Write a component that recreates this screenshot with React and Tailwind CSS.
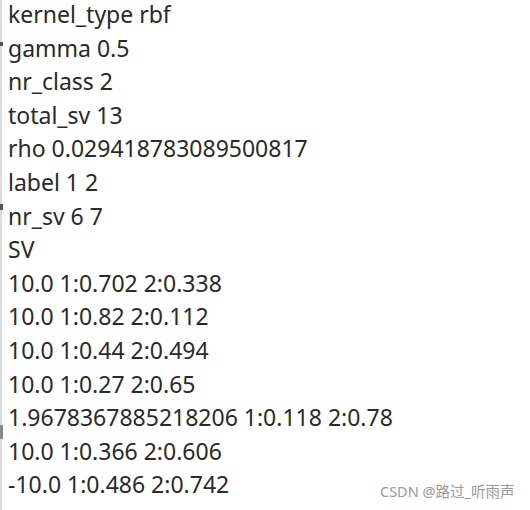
export default function App() {
  const lines = [
    "kernel_type rbf",
    "gamma 0.5",
    "nr_class 2",
    "total_sv 13",
    "rho 0.029418783089500817",
    "label 1 2",
    "nr_sv 6 7",
    "SV",
    "10.0 1:0.702 2:0.338",
    "10.0 1:0.82 2:0.112",
    "10.0 1:0.44 2:0.494",
    "10.0 1:0.27 2:0.65",
    "1.9678367885218206 1:0.118 2:0.78",
    "10.0 1:0.366 2:0.606",
    "-10.0 1:0.486 2:0.742",
    "-10.0 1:0.91 2:0.538",
  ];
  return (
    <div className="relative w-[530px] h-[510px] overflow-hidden bg-white">
      <div className="flex h-full">
        <div className="w-[2px] h-full bg-[#dcdcdc] shrink-0" />
        <div
          className="flex flex-col pl-[6px] -mt-[2px] text-[23px] leading-[33.6px] text-[#2a2a2a]"
          style={{ fontFamily: '"Noto Sans", sans-serif' }}
        >
          {lines.map((l, i) => (
            <div key={i} className="whitespace-pre">{l}</div>
          ))}
        </div>
      </div>
      <div className="absolute left-0 top-[42px] w-[3px] h-[4px] bg-[#555]" />
      <div className="absolute left-0 top-[204px] w-[3px] h-[6px] bg-[#555]" />
      <div className="absolute left-0 top-[425px] w-[3px] h-[14px] bg-[#888]" />
      <div
        className="absolute left-[380px] top-[481px] text-[14.5px] text-[#9a9a9a]"
        style={{ fontFamily: '"Noto Sans", "Noto Sans CJK SC", sans-serif' }}
      >
        CSDN @路过_听雨声
      </div>
    </div>
  );
}
